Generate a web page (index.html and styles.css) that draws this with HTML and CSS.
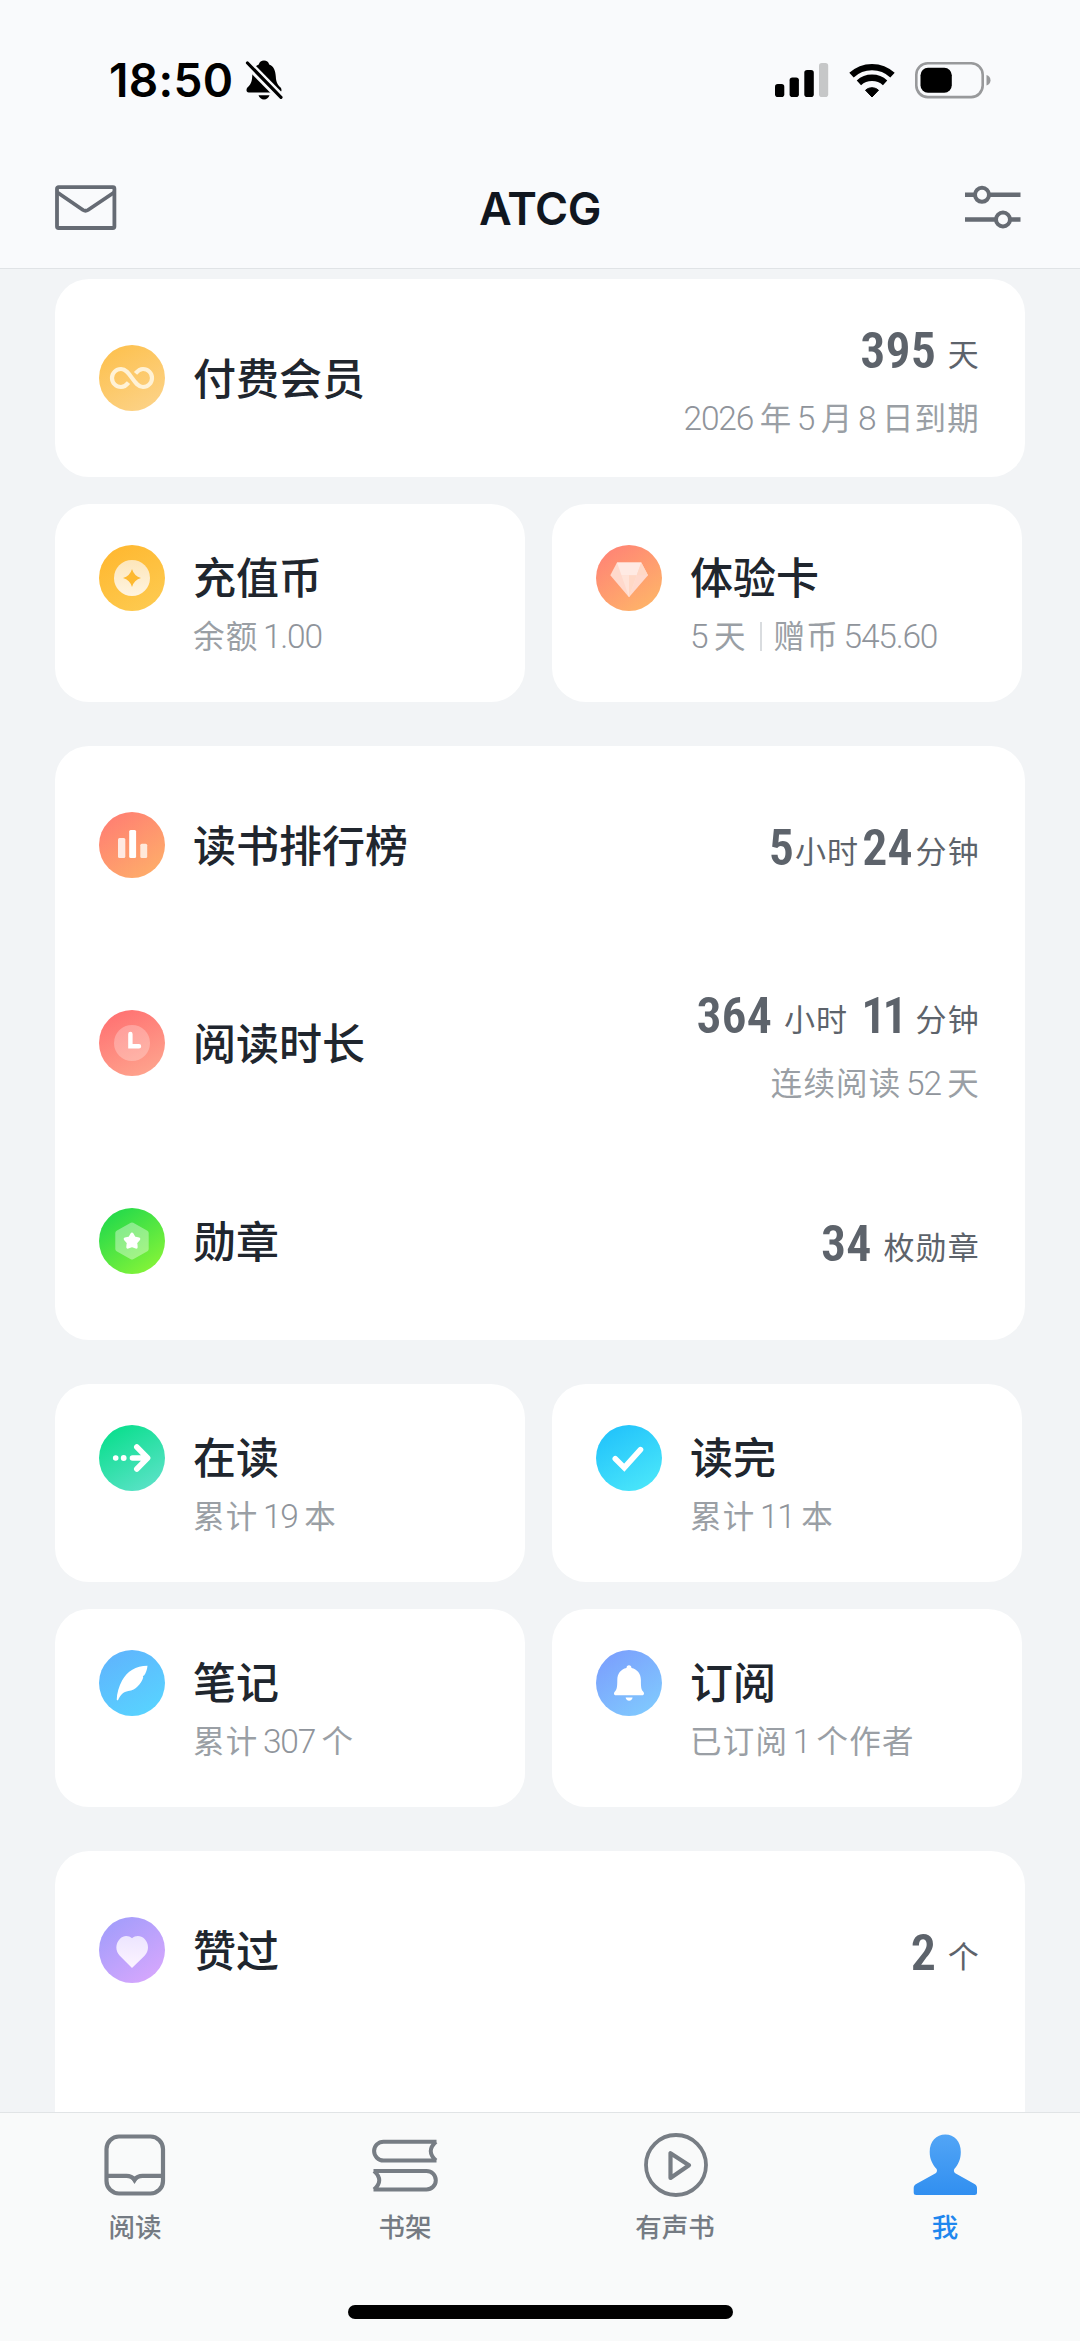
FILE: index.html
```html
<!DOCTYPE html>
<html lang="zh-CN">
<head>
<meta charset="utf-8">
<title>ATCG</title>
<link rel="stylesheet" href="styles.css">
</head>
<body>
<header class="header">
  <div class="status">
    <div class="status-left">
      <span class="time">18:50</span>
      <svg class="mute" width="38" height="40" viewBox="0 0 38 40">
        <path d="M13.5 35.3h11c-.8 2.6-3 4.2-5.500 4.200s-4.700-1.600-5.500-4.200z"/>
        <path d="M19 .5c2.600 0 4.600 1.500 5.200 3.900 4.600 1.900 6.300 6.200 6.600 12 .3 6.500 2 8.200 4.600 10.900 1.600 1.700 1.700 5.200-1.200 5.200H3.800c-2.900 0-2.800-3.500-1.200-5.200 2.600-2.700 4.300-4.400 4.600-10.900.3-5.800 2-10.100 6.600-12C14.400 2 16.400.5 19 .5z"/>
        <path d="M2 3L36 37.500" stroke="#f9fafc" stroke-width="8.500"/>
        <path d="M2.500 3L36 37.300" stroke="#000" stroke-width="3.200" stroke-linecap="round"/>
      </svg>
    </div>
    <div class="status-right">
      <svg width="54" height="36" viewBox="0 0 54 36">
        <rect x="0" y="22" width="9.300" height="13" rx="2.800"/>
        <rect x="14.600" y="15.500" width="9.300" height="19.500" rx="2.800"/>
        <rect x="29.300" y="8" width="9.500" height="27" rx="2.800"/>
        <rect x="44" y="1" width="9.200" height="34" rx="2.800" fill="#c6c7c8"/>
      </svg>
      <svg width="46" height="36" viewBox="0 0 46 36">
        <path d="M23 35l-6.500-6.800c3.700-3.300 9.300-3.300 13 0z" stroke="#000" stroke-width="1" stroke-linejoin="round"/>
        <path d="M9.900 20.800c7.300-6.700 18.900-6.700 26.200 0" fill="none" stroke="#000" stroke-width="6.400"/>
        <path d="M2.500 13.200c11.500-10.800 29.500-10.800 41 0" fill="none" stroke="#000" stroke-width="6.400"/>
      </svg>
      <svg width="76" height="38" viewBox="0 0 76 38">
        <rect x="1.300" y="2.300" width="66.400" height="33.800" rx="11.500" fill="none" stroke="#98999b" stroke-width="2.600"/>
        <rect x="5.500" y="6.800" width="31.300" height="25" rx="7.500"/>
        <path d="M71.500 14c2.600.8 4 2.800 4 5.200s-1.400 4.400-4 5.200z" fill="#98999b"/>
      </svg>
    </div>
  </div>
  <nav class="nav">
    <svg width="62" height="46" viewBox="0 0 62 46" fill="none" stroke="#666b74" stroke-width="3.800">
      <rect x="2" y="2.200" width="57.400" height="40.800" rx="1.500"/>
      <path d="M2.500 7.500L28 25q2.500 1.600 5 0L59 7.500"/>
    </svg>
    <h1 class="nav-title">ATCG</h1>
    <svg width="56" height="46" viewBox="0 0 56 46" fill="none" stroke="#666b73">
      <path d="M0 9.800h9M25 9.800h30.500M0 34.500h30M45 34.500h10.500" stroke-width="4.400"/>
      <circle cx="17" cy="9.800" r="7" stroke-width="4"/>
      <circle cx="38" cy="34.500" r="7" stroke-width="4"/>
    </svg>
  </nav>
</header>

<main class="content">
  <section class="card">
    <div class="row">
      <div class="icon icon-member"><svg viewBox="0 0 66 66"><path d="M29.500 37.600c-2.200 2.700-4.600 4.400-7.500 4.400a9 9 0 1 1 0-18c4.800 0 7.800 4.400 11 9s6.200 9 11 9a9 9 0 1 0 0-18c-3 0-5.300 1.700-7.500 4.400" fill="none" stroke="#fff2d6" stroke-width="4.200"/></svg></div>
      <h2 class="title">付费会员</h2>
      <div class="detail">
        <p class="value">395<span class="unit gap-a">天</span></p>
        <p class="sub"><b>2026</b> 年 <b>5</b> 月 <b>8</b> 日到期</p>
      </div>
    </div>
  </section>

  <section class="tiles">
    <article class="tile">
      <div class="icon icon-coin"><svg viewBox="0 0 66 66"><defs><linearGradient id="coin" x2="0" y2="1"><stop stop-color="#fde6ba"/><stop offset="1" stop-color="#fff4e0"/></linearGradient></defs><circle cx="33" cy="33" r="18" fill="url(#coin)"/><path d="M33 24q2 7 9 9-7 2-9 9-2-7-9-9 7-2 9-9z" fill="#fdb931"/></svg></div>
      <div class="tile-text"><h2 class="title">充值币</h2><p class="sub">余额 <b>1.00</b></p></div>
    </article>
    <article class="tile">
      <div class="icon icon-card"><svg viewBox="0 0 66 66"><path d="M21 17.500h24.300l6.700 12.800-19 22-18.700-22z" fill="#ffd9cc"/><path d="M21 17.500h24.300l-4.600 12.800H25.500z" fill="#ffeae3"/><path d="M25.500 30.300h15.200L33 52.300z" fill="#ffe3d8"/><path d="M33 30.300h7.700L33 52.300zM45.300 17.500l6.700 12.800H40.700z" fill="#ffd8c6"/></svg></div>
      <div class="tile-text"><h2 class="title">体验卡</h2><p class="sub"><b>5</b> 天<i class="divider"></i>赠币 <b>545.60</b></p></div>
    </article>
  </section>

  <section class="card">
    <div class="row">
      <div class="icon icon-rank"><svg viewBox="0 0 66 66"><rect x="19" y="26" width="7.300" height="20" rx="1.500" fill="#ffe9e2"/><rect x="30.200" y="18" width="6.900" height="28" rx="1.500" fill="#fff"/><rect x="41.300" y="31.800" width="6.900" height="14.200" rx="1.500" fill="#ffe9da"/></svg></div>
      <h2 class="title">读书排行榜</h2>
      <div class="detail"><p class="value">5<span class="unit tight">小时</span>24<span class="unit gap-s">分钟</span></p></div>
    </div>
    <div class="row">
      <div class="icon icon-time"><svg viewBox="0 0 66 66"><circle cx="33" cy="33" r="18" fill="#fff" opacity=".27"/><path d="M31.400 24v12.300h8.600" fill="none" stroke="#fff" stroke-width="4.400" stroke-linecap="round"/></svg></div>
      <h2 class="title">阅读时长</h2>
      <div class="detail">
        <p class="value">364<span class="unit gap-a">小时</span><span class="ones">11</span><span class="unit gap-a">分钟</span></p>
        <p class="sub">连续阅读 <b>52</b> 天</p>
      </div>
    </div>
    <div class="row">
      <div class="icon icon-medal"><svg viewBox="0 0 66 66"><path d="M33 17l14.200 8v16L33 49l-14.200-8V25z" fill="#fff" stroke="#fff" stroke-width="5" stroke-linejoin="round" opacity=".38"/><path d="M33 26l2.300 4 4.500 1-3 3.600.4 4.600-4.200-1.700-4.200 1.700.4-4.600-3-3.600 4.500-1z" fill="#fff" stroke="#fff" stroke-width="3" stroke-linejoin="round"/></svg></div>
      <h2 class="title">勋章</h2>
      <div class="detail"><p class="value">34<span class="unit gap-a">枚勋章</span></p></div>
    </div>
  </section>

  <section class="tiles">
    <article class="tile">
      <div class="icon icon-reading"><svg viewBox="0 0 66 66"><circle cx="16.700" cy="33" r="2.800" fill="#fff"/><circle cx="24.700" cy="33" r="2.900" fill="#fff"/><path d="M33.500 33H48M37.800 22l10.800 11-10.800 11" fill="none" stroke="#fff" stroke-width="5.600" stroke-linecap="round" stroke-linejoin="round"/></svg></div>
      <div class="tile-text"><h2 class="title">在读</h2><p class="sub">累计 <b>19</b> 本</p></div>
    </article>
    <article class="tile">
      <div class="icon icon-done"><svg viewBox="0 0 66 66"><path d="M19.300 33.800l9 8.900 16.200-18" fill="none" stroke="#fff" stroke-width="5.600" stroke-linecap="round" stroke-linejoin="miter"/></svg></div>
      <div class="tile-text"><h2 class="title">读完</h2><p class="sub">累计 <b>11</b> 本</p></div>
    </article>
    <article class="tile">
      <div class="icon icon-note"><svg viewBox="0 0 66 66"><path d="M48.500 15.700c-.3 4-1.600 7-3.400 9.800l-1.200.6.300 1.300c-1 3.400-3 6.200-5.200 8.500-2.600 2.900-5.800 4.700-9.700 5.200-5 .8-7.500 3.600-10.400 9.400l-1.200-.7c.1-6.200 2.200-13.500 5.500-19.500 5-9 13.500-14.400 25.300-14.600z" fill="#fff"/></svg></div>
      <div class="tile-text"><h2 class="title">笔记</h2><p class="sub">累计 <b>307</b> 个</p></div>
    </article>
    <article class="tile">
      <div class="icon icon-bell"><svg viewBox="0 0 66 66"><path d="M33 15.200c1.500 0 2.400 1 2.500 2.700 5.700 1.200 9.400 5.600 9.400 12 0 6.700.2 9.600 2.200 11.500 1.600 1.600 1 3.900-1 3.900H19.900c-2 0-2.600-2.300-1-3.900 2-1.900 2.400-4.800 2.400-11.500 0-6.400 3.500-10.800 9.200-12 .1-1.700 1-2.700 2.500-2.700zM29.600 47.500h7c-.3 2-1.600 3.200-3.500 3.200s-3.200-1.200-3.500-3.200z" fill="#fff"/></svg></div>
      <div class="tile-text"><h2 class="title">订阅</h2><p class="sub">已订阅 <b>1</b> 个作者</p></div>
    </article>
  </section>

  <section class="card card-open">
    <div class="row">
      <div class="icon icon-like"><svg viewBox="0 0 66 66"><defs><linearGradient id="heart" x2="0" y2="1"><stop stop-color="#ece5ff"/><stop offset="1" stop-color="#fcf4ff"/></linearGradient></defs><path d="M33 21.300c3.600-3.300 9-3 12.400.5 4.800 5 4.800 12.100.2 17L33 51 20.800 38.800c-4.600-4.900-4.600-12 .2-17 3.400-3.500 8.400-3.800 12-.5z" fill="url(#heart)"/></svg></div>
      <h2 class="title">赞过</h2>
      <div class="detail"><p class="value">2<span class="unit gap-a">个</span></p></div>
    </div>
  </section>
</main>

<footer class="tabbar">
  <div class="tabs">
    <a class="tab">
      <svg width="66" height="66" viewBox="0 0 66 66" fill="none" stroke="#777d84" stroke-width="4.200">
        <rect x="4.500" y="4.500" width="56.500" height="57" rx="12.500"/>
        <path d="M4.500 43.800h20q5.200 0 8 3.800 2.800-3.800 8-3.800h20.500"/>
        <path d="M28.500 45.500l4 6.500 4-6.500z" fill="#777d84" stroke="none"/>
      </svg>
      <span>阅读</span>
    </a>
    <a class="tab">
      <svg width="66" height="66" viewBox="0 0 66 66" fill="none" stroke="#777d84" stroke-width="4">
        <path d="M64.500 9.700H11.500a9.400 9.400 0 0 0 0 18.800h53M64 9.700q-10.500 9.400 0 18.800"/>
        <path d="M1.500 38.900h53a9.300 9.300 0 0 1 0 18.600h-53M2 38.900q10.500 9.300 0 18.600"/>
      </svg>
      <span>书架</span>
    </a>
    <a class="tab">
      <svg width="66" height="66" viewBox="0 0 66 66" fill="none" stroke="#777d84" stroke-width="3.800">
        <circle cx="34" cy="33" r="30"/>
        <path d="M28.500 21.200v24.800L47 33.200z" stroke-width="4.200" stroke-linejoin="round"/>
      </svg>
      <span>有声书</span>
    </a>
    <a class="tab tab-active">
      <svg width="66" height="66" viewBox="0 0 66 66">
        <defs><linearGradient id="me" x2="0" y2="1"><stop stop-color="#52a5f6"/><stop offset="1" stop-color="#318ff0"/></linearGradient></defs>
        <path d="M33.300 2.500c9 0 15.500 7 15.500 17.500 0 7.300-2.600 12.800-6.300 16.700-.9 1-.9 3.200.8 4.500L62.500 52c1.700 1 2.500 2.200 2.500 4v4.500q0 2.500-2.500 2.500H4.200q-2.500 0-2.500-2.500V56c0-1.800.8-3 2.500-4l19.400-10.800c1.700-1.300 1.700-3.500.8-4.500-3.700-3.900-6.700-9.400-6.700-16.700C17.700 9.500 24.300 2.500 33.300 2.500z" fill="url(#me)"/>
      </svg>
      <span>我</span>
    </a>
  </div>
  <div class="home-indicator"></div>
</footer>
</body>
</html>
```
FILE: styles.css
```css
* { box-sizing: border-box; }

body {
  margin: 0;
  width: 1080px;
  height: 2341px;
  display: flex;
  flex-direction: column;
  overflow: hidden;
  background: #f2f4f6;
  color: #20262e;
  font-family: Roboto, "Noto Sans CJK SC", sans-serif;
}

h1, h2, p { margin: 0; font-weight: inherit; }
svg { display: block; flex: none; }

/* Header */
.header {
  flex: none;
  height: 269px;
  background: #f9fafc;
  border-bottom: 1px solid #e0e3e6;
}
.status {
  height: 160px;
  padding: 0 89px 0 109px;
  display: flex;
  align-items: center;
  justify-content: space-between;
}
.status-left { display: flex; align-items: center; gap: 12px; }
.time {
  font: 600 46px/1 Inter, sans-serif;
  color: #000;
  letter-spacing: 0.3px;
}
.status-right { display: flex; align-items: center; gap: 20px; }
.nav {
  height: 96px;
  padding: 0 59px 0 55px;
  display: flex;
  align-items: center;
  justify-content: space-between;
}
.nav-title {
  font: 600 45px/1 Inter, sans-serif;
  color: #10161f;
  letter-spacing: -0.5px;
  padding: 1px 2px 0 0;
}

/* Content */
.content {
  flex: 1;
  min-height: 0;
  overflow: hidden;
  padding: 10px 55px 0;
}
.card {
  background: #fff;
  border-radius: 34px;
  padding-right: 45px;
  margin-bottom: 44px;
}
.card:first-child { margin-bottom: 27px; }
.card-open { height: 400px; }
.row {
  height: 198px;
  padding-left: 44px;
  display: flex;
  align-items: center;
}
.tiles {
  display: grid;
  grid-template-columns: 470px 470px;
  gap: 27px;
  margin-bottom: 44px;
}
.tile {
  height: 198px;
  padding: 41px 0 0 44px;
  display: flex;
  align-items: flex-start;
  background: #fff;
  border-radius: 34px;
}
.title {
  padding-top: 4px;
  margin-left: 28px;
  font-size: 43px;
  line-height: 66px;
  font-weight: 500;
  white-space: nowrap;
}
.tile .title { padding-top: 1px; }
.tile-text .sub { margin-left: 28px; line-height: 51px; }
.sub {
  font-size: 31.500px;
  line-height: 67px;
  font-weight: 400;
  color: #9a9fa5;
  letter-spacing: 1.200px;
  word-spacing: -4.500px;
  white-space: nowrap;
}
.sub b {
  margin-right: 2px;
  font-size: 33.500px;
  line-height: 0;
  font-weight: 300;
  font-stretch: 90%;
  letter-spacing: -1.200px;
  color: #8f949b;
}
.divider {
  display: inline-block;
  width: 2px;
  height: 29px;
  margin: 0 12px 0 13px;
  background: #d9dcdf;
  vertical-align: -3px;
}
.detail { margin-left: auto; padding-top: 6px; text-align: right; }
.detail:has(.sub) { padding-top: 14px; }
.detail .sub { margin-top: 1px; }
.value {
  font-size: 50px;
  line-height: 67px;
  font-weight: 600;
  font-stretch: 87%;
  color: #5d636b;
  white-space: nowrap;
}
.unit {
  font-size: 31px;
  line-height: 0;
  font-weight: 400;
  letter-spacing: 1.200px;
  vertical-align: 2px;
}
.gap-a { margin-left: 12px; }
.gap-s { margin-left: 3px; }
.tight { margin: 0 3px 0 1px; }
.ones { margin-left: 13px; letter-spacing: -4px; }

/* Round icons */
.icon { flex: none; width: 66px; height: 66px; border-radius: 50%; }
.icon-member { background: linear-gradient(150deg, #fdbf49, #fcd48d); }
.icon-coin { background: linear-gradient(150deg, #ffb62d, #fdcc53); }
.icon-card { background: linear-gradient(145deg, #ff8475 10%, #feb469 90%); }
.icon-rank { background: linear-gradient(145deg, #ff7f72 10%, #fead6a 90%); }
.icon-time { background: linear-gradient(155deg, #ff7272 10%, #fea38d 90%); }
.icon-medal { background: linear-gradient(145deg, #22d94b 10%, #86f438 90%); }
.icon-reading { background: linear-gradient(150deg, #0fdf91 15%, #5fe2ca 95%); }
.icon-done { background: linear-gradient(150deg, #22c3fb 10%, #4ae6fa 90%); }
.icon-note { background: linear-gradient(150deg, #5fb5fd 10%, #58d3ff 90%); }
.icon-bell { background: linear-gradient(145deg, #7ba0fd 10%, #80c9fe 90%); }
.icon-like { background: linear-gradient(145deg, #a39dfb 10%, #d6a7fd 90%); }

/* Tab bar */
.tabbar {
  flex: none;
  height: 229px;
  background: #f9fafa;
  border-top: 1px solid #e1e4e6;
}
.tabs { display: grid; grid-template-columns: repeat(4, 1fr); padding-top: 19px; }
.tab {
  display: flex;
  flex-direction: column;
  align-items: center;
  gap: 11px;
  color: #757b83;
  font-size: 26.500px;
  line-height: 38px;
  font-weight: 500;
}
.tab-active { color: #1f87ee; }
.home-indicator {
  width: 385px;
  height: 14px;
  margin: 58px auto 0;
  border-radius: 7px;
  background: #000;
}
```
